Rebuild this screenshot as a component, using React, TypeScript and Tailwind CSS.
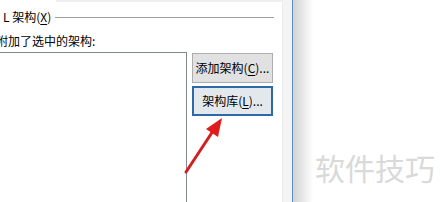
import React from "react";

const font = { fontFamily: '"Noto Sans CJK SC", "Noto Sans", sans-serif' };

export default function App() {
  return (
    <div
      className="relative w-[446px] h-[202px] bg-white flex overflow-hidden text-black"
      style={font}
    >
      {/* dialog content */}
      <div className="w-[282px] flex flex-col">
        <div className="h-[2px] ml-[56px] bg-[#f0f0f0]" />
        <div className="mt-[8px] h-[14px] flex items-center pl-[3px] text-[12px] leading-[14px]">
          <span className="whitespace-nowrap">
            L 架构(<span className="underline underline-offset-2">X</span>)
          </span>
          <div className="flex-1 h-px bg-[#a0a0a0] ml-[4px] mr-[8px]" />
        </div>
        <div className="mt-[9px] ml-[-4px] text-[12px] leading-[16px] whitespace-nowrap">
          附加了选中的架构:
        </div>
        <div className="mt-[3px] flex flex-1">
          <div className="w-[187px] border-t border-r border-[#828790]" />
          <div className="ml-[5px] flex flex-col gap-[3px] pt-[1px]">
            <div className="w-[81px] h-[30px] bg-[#e1e1e1] border border-[#adadad] flex items-center justify-center text-[12px] whitespace-nowrap">
              添加架构(<span className="underline underline-offset-2">C</span>)...
            </div>
            <div className="w-[81px] h-[30px] bg-[#e3e8ec] border-2 border-[#2b6aa6] flex items-center justify-center text-[12px] whitespace-nowrap">
              架构库(<span className="underline underline-offset-2">L</span>)...
            </div>
          </div>
        </div>
      </div>
      {/* frame */}
      <div className="w-[10px] bg-[#f4f4f4] border-l border-[#ececec]" />
      <div className="w-[1px] bg-[#5e8fc4]" />
      <div className="w-[20px] bg-gradient-to-r from-[#d2d2d2] to-white" />
      <div className="flex-1 flex flex-col pt-[147px] pl-[2px]">
        <div className="text-[30px] leading-[40px] text-[#d9d9d9] whitespace-nowrap">
          软件技巧
        </div>
      </div>
      {/* annotation arrow */}
      <svg
        className="absolute left-0 top-0 pointer-events-none"
        width="446"
        height="202"
        viewBox="0 0 446 202"
      >
        <line
          x1="186"
          y1="172"
          x2="213"
          y2="131"
          stroke="#d21f1f"
          strokeWidth="3"
          strokeLinecap="round"
        />
        <polygon points="222,118 206,129 218,137" fill="#e01b1b" />
      </svg>
    </div>
  );
}
